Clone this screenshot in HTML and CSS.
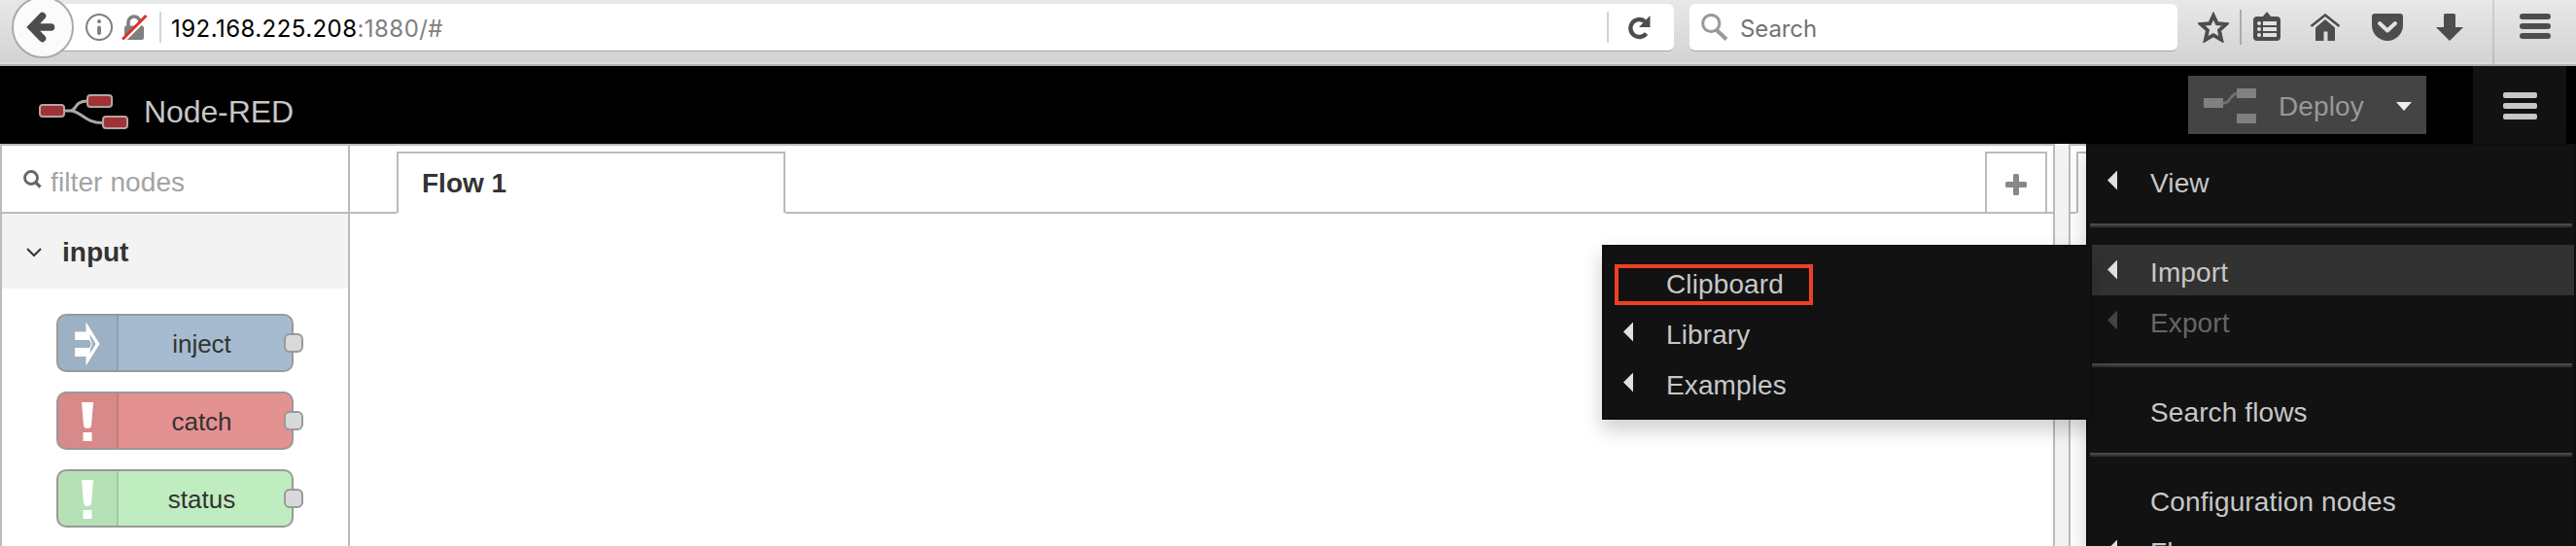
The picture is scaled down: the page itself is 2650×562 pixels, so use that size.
FILE: index.html
```html
<!DOCTYPE html>
<html lang="en">
<head>
<meta charset="utf-8">
<title>Node-RED</title>
<link rel="stylesheet" href="styles.css">
</head>
<body>
<div class="browser">
  <div class="back"><svg width="60" height="60" viewBox="14 -2 60 60"><path d="M43.500 16.500 32.500 28l11 11.500M33 28h19.500" fill="none" stroke="#4d4d4d" stroke-width="7.500" stroke-linejoin="miter" stroke-linecap="round"/></svg></div>
  <div class="url">
    <svg class="info" width="28" height="28" viewBox="0 0 28 28"><circle cx="14" cy="14" r="13" fill="none" stroke="#808080" stroke-width="2"/><circle cx="14" cy="8" r="2.100" fill="#808080"/><rect x="12" y="12.500" width="4" height="9.500" rx="2" fill="#808080"/></svg>
    <svg class="lock" width="27" height="27" viewBox="0 0 27 27"><path d="M7 13V8.500a6 6 0 0 1 12-1V13" fill="none" stroke="#808080" stroke-width="3.600"/><rect x="3" y="11.500" width="20" height="14.500" rx="2" fill="#808080"/><path d="M3 26.500 27.500 2" stroke="#fff" stroke-width="3"/><path d="M1 25.500 25.500 1" stroke="#e03028" stroke-width="3"/></svg>
    <i class="rule"></i>
    <span class="address">192.168.225.208<span class="dim">:1880/#</span></span>
    <i class="rule end"></i>
    <svg class="reload" width="24" height="26" viewBox="0 0 24 26"><path d="M18.500 19.500A9 9 0 1 1 17 7" fill="none" stroke="#4d4d4d" stroke-width="4.400"/><path d="M22.500 1v12H11z" fill="#4d4d4d"/></svg>
  </div>
  <div class="find">
    <svg width="28" height="28" viewBox="0 0 28 28"><circle cx="10.300" cy="10" r="8.600" fill="none" stroke="#999" stroke-width="3"/><path d="M16 17l10 9.500" stroke="#999" stroke-width="4"/></svg>
    <span>Search</span>
  </div>
  <svg class="star" width="32" height="32" viewBox="0 0 32 32"><path d="M16 4l3.700 8.100 9.300.8-7 6.200 2.200 9.900L16 24.100l-8.200 4.900L10 19.100l-7-6.200 9.300-.8z" fill="none" stroke="#4d4d4d" stroke-width="3.800"/></svg>
  <i class="tick"></i>
  <svg class="list" width="28" height="30" viewBox="0 0 28 30"><path d="M9 6l5-6 5 6z" fill="#4d4d4d"/><rect y="5" width="28" height="25" rx="4" fill="#4d4d4d"/><g fill="#e2e2e2"><rect x="10" y="10" width="14" height="4"/><rect x="10" y="16" width="14" height="4"/><rect x="10" y="22" width="14" height="4"/><circle cx="6" cy="12" r="2"/><circle cx="6" cy="18" r="2"/><circle cx="6" cy="24" r="2"/></g></svg>
  <svg class="home" width="32" height="28" viewBox="0 0 32 28"><path d="M1.500 13 16 1.500 30.500 13" fill="none" stroke="#4d4d4d" stroke-width="2.600"/><path d="M16 6 26 14.500V28H18.500V18.500h-4V28H6V14.500z" fill="#4d4d4d"/></svg>
  <svg class="pocket" width="32" height="28" viewBox="0 0 32 28"><path d="M3 0h26a3 3 0 0 1 3 3v9a16 16 0 0 1-32 0V3a3 3 0 0 1 3-3z" fill="#4d4d4d"/><path d="M8 10l8 7.500L24 10" fill="none" stroke="#e2e2e2" stroke-width="4" stroke-linecap="round" stroke-linejoin="round"/></svg>
  <svg class="down" width="28" height="28" viewBox="0 0 28 28"><path d="M9.500 0h9a1.500 1.500 0 0 1 1.500 1.500V14h8L14 28 0 14h8V1.500A1.500 1.500 0 0 1 9.500 0z" fill="#4d4d4d"/></svg>
  <i class="split"></i>
  <svg class="bars" width="32" height="26" viewBox="0 0 32 26"><g fill="#4d4d4d"><rect width="32" height="6" rx="3"/><rect y="10" width="32" height="6" rx="3"/><rect y="20" width="32" height="6" rx="3"/></g></svg>
</div>

<header class="header">
  <svg class="logo" width="92" height="36" viewBox="0 0 92 36"><path d="M26 17H32C39 17 36 7 50 7M32 17C44 17 46 29.500 66 29.500" fill="none" stroke="#a9a9a9" stroke-width="3"/><g fill="#a03235" stroke="#b5a5a5" stroke-width="2"><rect x="1" y="11" width="25" height="12" rx="3"/><rect x="50" y="1" width="25" height="12" rx="3"/><rect x="66" y="23" width="25" height="12" rx="3"/></g></svg>
  <h1 class="brand">Node-RED</h1>
  <div class="deploy">
    <svg width="54" height="36" viewBox="0 0 54 36"><path d="M19 15.500c10 0 7-10.500 17-10.500" fill="none" stroke="#707070" stroke-width="3"/><g fill="#808080"><rect y="10" width="20" height="10"/><rect x="34" width="20" height="10"/><rect x="34" y="26" width="20" height="10"/></g></svg>
    <span>Deploy</span>
    <i class="caret"></i>
  </div>
  <div class="burger"><i></i><i></i><i></i></div>
</header>

<main class="editor">
  <aside class="palette">
    <div class="filter">
      <svg width="20" height="20" viewBox="0 0 20 20"><circle cx="8" cy="8" r="6.500" fill="none" stroke="#666" stroke-width="2.900"/><path d="M12.500 12.500l5 5" stroke="#666" stroke-width="3.200"/></svg>
      <span>filter nodes</span>
    </div>
    <div class="category">
      <svg width="16" height="10" viewBox="0 0 16 10"><path d="M1 1l7 7 7-7" fill="none" stroke="#333" stroke-width="2"/></svg>
      <span>input</span>
    </div>
    <div class="nodes">
      <div class="node inject"><div class="glyph"><svg width="28" height="46" viewBox="0 0 28 46"><path d="M1 10.500h11.500V0.500L26.500 23 12.500 45.500V36H1v-9h15l2-4-2-4H1z" fill="#fff"/><path d="M16.500 13l6 10-6 10 .5-5 2-5-2-5z" fill="#9eb1c4"/></svg></div><span>inject</span><i class="port"></i></div>
      <div class="node catch"><div class="glyph"><svg width="28" height="46" viewBox="0 0 28 46"><path d="M8 3h12l-2 24q-.5 3-4 3t-4-3zM9.500 34h9v9h-9z" fill="#fff"/></svg></div><span>catch</span><i class="port"></i></div>
      <div class="node status"><div class="glyph"><svg width="28" height="46" viewBox="0 0 28 46"><path d="M8 3h12l-2 24q-.5 3-4 3t-4-3zM9.500 34h9v9h-9z" fill="#fff"/></svg></div><span>status</span><i class="port"></i></div>
    </div>
  </aside>
  <section class="workspace">
    <div class="tabs">
      <div class="gap first"></div>
      <div class="tab">Flow 1</div>
      <div class="gap fill"></div>
      <div class="add"><svg width="22" height="22" viewBox="0 0 22 22"><path d="M9.500 0h3A1.500 1.500 0 0 1 14 1.500V8h6.500A1.500 1.500 0 0 1 22 9.500v3a1.500 1.500 0 0 1-1.500 1.500H14v6.500a1.500 1.500 0 0 1-1.500 1.500h-3A1.500 1.500 0 0 1 8 20.500V14H1.500A1.500 1.500 0 0 1 0 12.500v-3A1.500 1.500 0 0 1 1.500 8H8V1.500A1.500 1.500 0 0 1 9.500 0z" fill="#888"/></svg></div>
      <div class="gap last"></div>
    </div>
  </section>
  <div class="separator"></div>
  <section class="sidebar">
    <div class="tabs"><div class="gap side"></div><div class="tab"></div></div>
  </section>
</main>

<nav class="menu">
  <div class="item"><i class="arrow"></i><span>View</span></div>
  <hr>
  <div class="item active"><i class="arrow"></i><span>Import</span></div>
  <div class="item off"><i class="arrow"></i><span>Export</span></div>
  <hr>
  <div class="item"><i></i><span>Search flows</span></div>
  <hr>
  <div class="item"><i></i><span>Configuration nodes</span></div>
  <div class="item"><i class="arrow"></i><span>Flows</span></div>
</nav>
<nav class="submenu">
  <div class="item"><i></i><span>Clipboard</span></div>
  <div class="item"><i class="arrow"></i><span>Library</span></div>
  <div class="item"><i class="arrow"></i><span>Examples</span></div>
  <div class="highlight"></div>
</nav>
</body>
</html>
```
FILE: styles.css
```css
* { box-sizing: border-box; }
html, body { margin: 0; height: 562px; overflow: hidden; }
body { position: relative; background: #fff; font-family: "Liberation Sans", Arial, sans-serif; font-size: 28px; color: #333; display: flex; flex-direction: column; }
svg { display: block; flex: none; }
i { display: block; flex: none; }

.browser { height: 68px; flex: none; display: flex; align-items: flex-start; background: linear-gradient(#e8e8e8, #d3d3d3 64px, #dedede 64px, #dedede 66px, #b1b1b1 66px); font-family: Inter, sans-serif; font-size: 24px; }
.back { flex: none; width: 64px; height: 64px; margin: -4px 0 0 12px; border: 2px solid #aaa; border-radius: 50%; background: #fbfbfb; z-index: 1; }
.url { width: 1672px; height: 49px; margin: 4px 0 0 -26px; flex: none; display: flex; align-items: center; background: #fff; border-bottom: 1px solid #a5a5a5; border-radius: 0 6px 6px 0; }
.info { margin-left: 38px; }
.lock { margin-left: 9px; }
.rule { width: 2px; height: 32px; background: #d4d4d4; margin-left: 12px; }
.address { margin-left: 10px; color: #000; letter-spacing: 0.45px; line-height: 46px; padding-top: 3px; }
.dim { color: #808080; }
.rule.end { margin-left: auto; }
.reload { margin: 0 23px 0 20px; }
.find { width: 502px; height: 49px; margin: 4px 0 0 16px; padding-left: 12px; flex: none; display: flex; align-items: center; background: #fff; border-bottom: 1px solid #a5a5a5; border-radius: 6px; color: #737373; }
.find span { margin-left: 12px; padding-top: 2px; letter-spacing: -0.1px; }
.star { margin: 12px 0 0 21px; }
.tick { width: 2px; height: 36px; margin: 10px 0 0 11px; background: #aaa; }
.list { margin: 12px 0 0 12px; }
.home { margin: 14px 0 0 30px; }
.pocket { margin: 14px 0 0 32px; }
.down { margin: 14px 0 0 34px; }
.split { width: 2px; height: 66px; margin-left: 30px; background: linear-gradient(#d0d0d0, #bcbcbc); }
.bars { margin: 14px 0 0 26px; }

.header { height: 80px; flex: none; background: #000; display: flex; align-items: center; padding: 0 10px 0 40px; }
.logo { margin-top: 14px; }
.brand { margin: 14px 0 0 16px; font-size: 32px; line-height: 36px; font-weight: 400; color: #c7c7c7; letter-spacing: -0.1px; }
.deploy { margin-left: auto; width: 245px; height: 60px; background: #444; display: flex; align-items: center; padding: 0 15px 0 16px; color: #999; }
.deploy svg { margin-top: 2px; }
.deploy span { margin-left: 23px; padding-top: 4px; font-size: 28px; letter-spacing: 0.1px; }
.caret { margin: 3px 0 0 auto; border: 8px solid transparent; border-top: 9px solid #eee; border-bottom: 0; }
.burger { width: 96px; height: 80px; margin-left: 48px; background: #121212; display: flex; flex-direction: column; align-items: center; justify-content: center; gap: 5px; padding-top: 2px; }
.burger i { width: 35px; height: 6px; border-radius: 2px; background: #c7c7c7; }

.editor { flex: 1; display: flex; min-height: 0; }
.palette { width: 360px; flex: none; border: 2px solid #bbb; border-bottom: 0; }
.filter { height: 70px; border-bottom: 2px solid #bbb; display: flex; align-items: center; padding: 4px 0 0 22px; color: #a3a3a3; }
.filter svg { margin-top: -3px; }
.filter span { margin-left: 8px; padding-top: 3px; letter-spacing: 0.1px; }
.category { height: 77px; background: #f3f3f3; display: flex; align-items: center; padding-left: 25px; font-weight: 700; }
.category svg { margin-top: 3px; }
.category span { margin-left: 21px; padding-top: 3px; }
.nodes { display: flex; flex-direction: column; gap: 20px; padding: 26px 0 0 56px; }
.node { width: 244px; height: 60px; border: 2px solid #999; border-radius: 10px; display: flex; align-items: center; position: relative; font-size: 26px; }
.node > span { flex: 1; text-align: center; padding: 2px 7px 0 0; }
.glyph { width: 62px; height: 56px; background: rgba(0,0,0,.05); border-right: 2px solid rgba(0,0,0,.1); border-radius: 8px 0 0 8px; display: flex; align-items: center; justify-content: center; padding-top: 2px; }
.inject { background: #a6bbcf; }
.catch { background: #e49191; }
.status { background: #c0edc0; }
.port { position: absolute; right: -12px; top: 18px; width: 20px; height: 20px; border: 2px solid #999; border-radius: 6px; background: #d9d9d9; }

.workspace { flex: 1; border-top: 2px solid #bbb; border-right: 2px solid #bbb; }
.tabs { display: flex; height: 70px; padding-top: 6px; }
.gap { height: 64px; border-bottom: 2px solid #bbb; }
.gap.first { width: 48px; }
.gap.fill { flex: 1; }
.gap.last { width: 6px; }
.gap.side { width: 6px; }
.tab { width: 400px; height: 63px; border: 2px solid #bbb; border-bottom: 0; padding: 15px 24px; font-weight: 700; line-height: 32px; }
.add { width: 64px; height: 64px; border: 2px solid #bbb; display: flex; align-items: center; justify-content: center; padding-top: 4px; }
.separator { width: 14px; background: #f3f3f3; }
.sidebar { width: 522px; border-top: 2px solid #bbb; border-left: 2px solid #bbb; }

.menu, .submenu { position: absolute; background: #121212; border: 2px solid #0e0e0e; color: #c7c7c7; box-shadow: 0 10px 20px rgba(0,0,0,.2); letter-spacing: 0.12px; }
.menu { left: 2146px; top: 148px; width: 504px; height: 414px; padding-top: 10px; border-bottom: 0; overflow: hidden; }
.submenu { left: 1648px; top: 252px; width: 504px; height: 180px; padding-top: 10px; }
.item { height: 52px; display: flex; align-items: center; padding-left: 20px; }
.item i { width: 10px; height: 20px; margin-top: -1px; }
.item span { margin-left: 34px; padding-top: 5px; }
.arrow { background: #e0e0e0; clip-path: polygon(100% 0, 100% 100%, 0 50%); }
.active { background: #323232; margin-left: 4px; padding-left: 16px; }
.off { color: #666; }
.off .arrow { background: #444; }
.menu hr { margin: 18px 2px; height: 4px; border: 0; border-top: 2px solid #484848; background: #333; }
.highlight { position: absolute; left: 11px; top: 18px; width: 204px; height: 42px; border: 4px solid #ee4023; }
```
